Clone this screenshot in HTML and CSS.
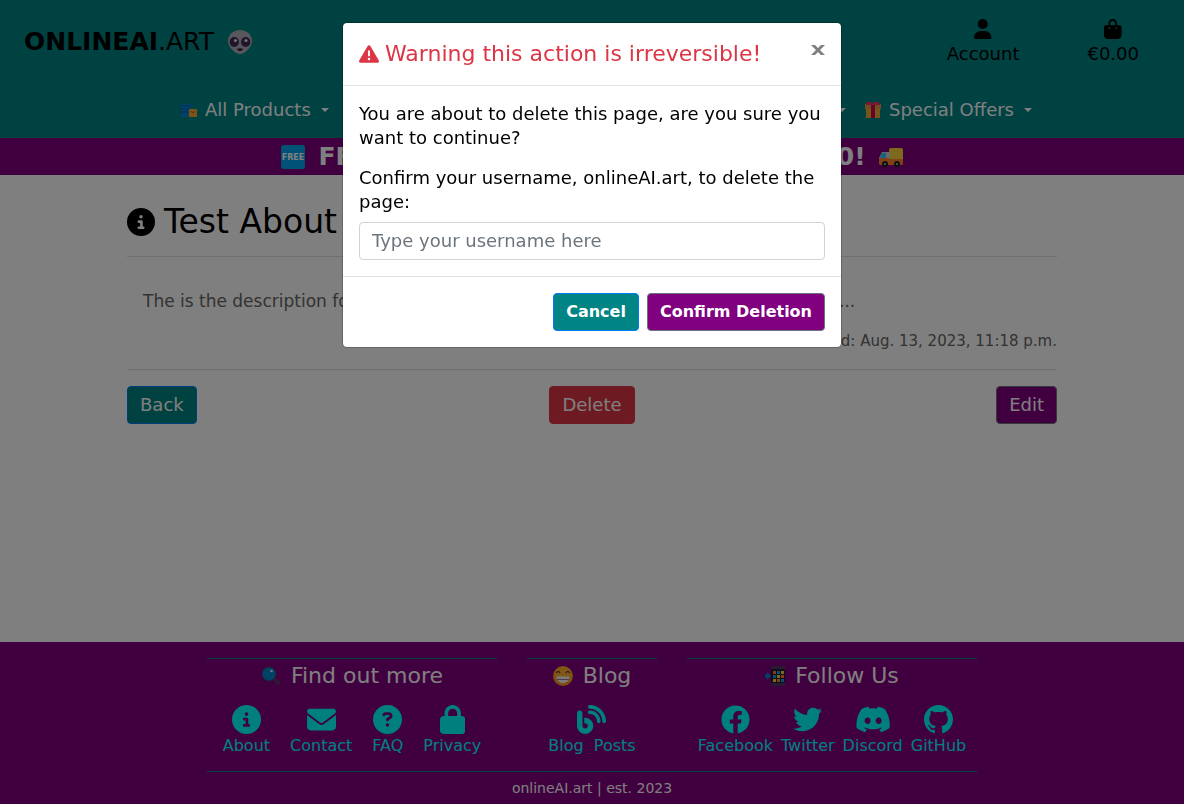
FILE: index.html
```html
<!DOCTYPE html>
<html lang="en">
<head>
<meta charset="utf-8">
<meta name="viewport" content="width=device-width, initial-scale=1">
<title>onlineAI.art</title>
<link rel="stylesheet" href="styles.css">
</head>
<body>
<header class="site-header">
  <div class="topbar">
    <a class="brand" href="#"><span><strong>ONLINEAI</strong>.ART</span>
      <svg class="brand-icon" viewBox="0 0 24 24" aria-hidden="true"><path d="M12 0C5 0 0 5 0 11c0 6 7 13 12 13s12-7 12-13C24 5 19 0 12 0z" fill="#b4acbc"/><ellipse cx="6.3" cy="12" rx="4.7" ry="5" fill="#402a55"/><ellipse cx="17.7" cy="12" rx="4.7" ry="5" fill="#402a55"/><circle cx="7.5" cy="10.5" r="1.6" fill="#e8e0f0"/><circle cx="18" cy="10.5" r="1.6" fill="#e8e0f0"/><path d="M9.500 19c1 2 4 2 5 0z" fill="#1c1c1c" stroke="#1c1c1c"/></svg>
    </a>
    <nav class="account" aria-label="Account">
      <a href="#"><svg viewBox="0 0 448 512" aria-hidden="true"><path d="M224 256A128 128 0 1 0 224 0a128 128 0 1 0 0 256zm-45.700 48C79.800 304 0 383.800 0 482.300C0 498.700 13.300 512 29.700 512H418.300c16.400 0 29.700-13.300 29.700-29.700C448 383.800 368.200 304 269.700 304H178.300z"/></svg>Account</a>
      <a href="#"><svg viewBox="0 0 448 512" aria-hidden="true"><path d="M160 112c0-35.300 28.700-64 64-64s64 28.700 64 64v48H160V112zm-48 48H48c-26.500 0-48 21.500-48 48V416c0 53 43 96 96 96H352c53 0 96-43 96-96V208c0-26.500-21.500-48-48-48H336V112C336 50.100 285.900 0 224 0S112 50.100 112 112v48zm24 48a24 24 0 1 1 0 48 24 24 0 1 1 0-48zm152 24a24 24 0 1 1 48 0 24 24 0 1 1-48 0z"/></svg>€0.00</a>
    </nav>
  </div>
  <nav class="main-nav" aria-label="Products">
    <a href="#"><svg class="nav-icon" viewBox="0 0 18 16" aria-hidden="true"><path d="M1 2h11v13H1z" fill="#0084ce"/><path d="M0 4h12M0 7h12M0 10h12" stroke="#00599a" stroke-width="1"/><path d="M9 7h8v8H9z" fill="#f8a832"/><path d="M11 9c1 2 3 2 4 0" fill="none" stroke="#a35f08"/></svg>All Products<span class="caret"></span></a>
    <a class="nav-middle" href="#">Art<span class="caret"></span></a>
    <a href="#"><svg class="nav-icon" viewBox="0 0 18 18" aria-hidden="true"><path d="M1 3h16v5H1z" fill="#e19747"/><path d="M2 8h14v9H2z" fill="#f0ad35"/><path d="M3 1h5l1 3 1-3h5l1 3H2z" fill="#f92f60"/><path d="M7 4h4v13H7z" fill="#ca0b4a"/></svg>Special Offers<span class="caret"></span></a>
  </nav>
</header>
<div class="banner">
  <svg class="banner-icon" viewBox="0 0 26 26" aria-hidden="true"><rect x="1" y="1" width="24" height="24" rx="3" fill="#00a6ed"/><text class="free-text" x="13" y="16" text-anchor="middle">FREE</text></svg>
  <span>FREE DELIVERY ON ORDERS OVER €50!</span>
  <svg class="banner-icon" viewBox="0 0 26 26" aria-hidden="true"><rect x="11" y="4" width="14" height="14" rx="2" fill="#fcd53f"/><path d="M4 8h8v12H1v-6z" fill="#d3d3d3"/><path d="M4 9h4v5H2z" fill="#26c9fc"/><path d="M1 14h10l1 1h13v5l-1 1H2l-1-1z" fill="#ff822d"/><circle cx="7" cy="20" r="3" fill="#1c1c1c"/><circle cx="19" cy="20" r="3" fill="#1c1c1c"/><circle cx="7" cy="20" r="1" fill="#bebebe"/><circle cx="19" cy="20" r="1" fill="#bebebe"/></svg>
</div>
<main class="page">
  <h1 class="page-title"><svg viewBox="0 0 512 512" aria-hidden="true"><path d="M256 512A256 256 0 1 0 256 0a256 256 0 1 0 0 512zM216 336h24V272H216c-13.300 0-24-10.700-24-24s10.700-24 24-24h48c13.300 0 24 10.700 24 24v88h8c13.300 0 24 10.700 24 24s-10.700 24-24 24H216c-13.300 0-24-10.700-24-24s10.700-24 24-24zm40-208a32 32 0 1 1 0 64 32 32 0 1 1 0-64z"/></svg>Test About</h1>
  <div class="page-text">
    <p class="description">The is the description for the test about page, and it has some text to read again....</p>
    <p class="date">Last edited: Aug. 13, 2023, 11:18 p.m.</p>
  </div>
  <div class="actions">
    <button class="btn btn-teal" type="button">Back</button>
    <button class="btn btn-red" type="button">Delete</button>
    <button class="btn btn-purple" type="button">Edit</button>
  </div>
</main>
<footer class="site-footer">
  <div class="footer-inner">
    <div class="footer-columns">
      <section class="footer-col">
        <h2><svg viewBox="0 0 20 20" aria-hidden="true"><path d="m12 13 2-2 5 5c1 1-1 4-3 3z" fill="#533566"/><circle cx="8" cy="8" r="7.5" fill="#533566"/><circle cx="8" cy="8" r="6.5" fill="#0084ce"/><circle cx="10.5" cy="5" r="1.3" fill="#d8f0ff"/></svg>Find out more</h2>
        <div class="links links-wide">
          <a href="#"><svg viewBox="0 0 512 512" aria-hidden="true"><path d="M256 512A256 256 0 1 0 256 0a256 256 0 1 0 0 512zM216 336h24V272H216c-13.300 0-24-10.700-24-24s10.700-24 24-24h48c13.300 0 24 10.700 24 24v88h8c13.300 0 24 10.700 24 24s-10.700 24-24 24H216c-13.300 0-24-10.700-24-24s10.700-24 24-24zm40-208a32 32 0 1 1 0 64 32 32 0 1 1 0-64z"/></svg>About</a>
          <a href="#"><svg viewBox="0 0 512 512" aria-hidden="true"><path d="M48 64C21.500 64 0 85.500 0 112c0 15.100 7.100 29.300 19.200 38.400L236.800 313.600c11.400 8.500 27 8.500 38.400 0L492.800 150.400c12.100-9.100 19.200-23.300 19.200-38.400c0-26.500-21.500-48-48-48H48zM0 176V384c0 35.300 28.700 64 64 64H448c35.300 0 64-28.700 64-64V176L294.400 339.200c-22.800 17.100-54 17.100-76.800 0L0 176z"/></svg>Contact</a>
          <a href="#"><svg viewBox="0 0 512 512" aria-hidden="true"><path d="M256 512A256 256 0 1 0 256 0a256 256 0 1 0 0 512zM169.800 165.300c7.900-22.300 29.100-37.300 52.800-37.300h58.300c34.900 0 63.100 28.300 63.100 63.100c0 22.600-12.100 43.500-31.700 54.800L280 264.400c-.2 13-10.900 23.600-24 23.600c-13.300 0-24-10.700-24-24V250.500c0-8.600 4.600-16.500 12.100-20.800l44.300-25.400c4.700-2.700 7.600-7.700 7.600-13.100c0-8.400-6.800-15.100-15.100-15.100H222.600c-3.400 0-6.400 2.100-7.500 5.300l-.4 1.200c-4.400 12.500-18.200 19-30.600 14.600s-19-18.200-14.600-30.600l.4-1.200zM224 352a32 32 0 1 1 64 0 32 32 0 1 1-64 0z"/></svg>FAQ</a>
          <a href="#"><svg viewBox="0 0 448 512" aria-hidden="true"><path d="M144 144v48H304V144c0-44.200-35.800-80-80-80s-80 35.800-80 80zM80 192V144C80 64.500 144.500 0 224 0s144 64.500 144 144v48h16c35.300 0 64 28.700 64 64V448c0 35.300-28.700 64-64 64H64c-35.300 0-64-28.700-64-64V256c0-35.300 28.700-64 64-64H80z"/></svg>Privacy</a>
        </div>
      </section>
      <section class="footer-col">
        <h2><svg viewBox="0 0 20 20" aria-hidden="true"><circle cx="10" cy="10" r="10" fill="#ff9a1f"/><circle cx="10" cy="9" r="8" fill="#ffb02e"/><path d="M3.500 7c.5-2 3-2 3.500 0M13 7c.5-2 3-2 3.500 0" fill="none" stroke="#402a32" stroke-width="1.200"/><path d="M3.500 10.500h13c0 4-3 6.500-6.500 6.500s-6.500-2.500-6.500-6.500z" fill="#f4f4f4"/><path d="M4 13.500h12" stroke="#a3709c"/></svg>Blog</h2>
        <div class="links">
          <a href="#"><svg viewBox="0 0 512 512" aria-hidden="true"><path d="M192 32c0 17.700 14.300 32 32 32c123.700 0 224 100.300 224 224c0 17.700 14.300 32 32 32s32-14.300 32-32C512 128.900 383.100 0 224 0c-17.700 0-32 14.300-32 32zm0 96c0 17.700 14.300 32 32 32c70.700 0 128 57.300 128 128c0 17.700 14.300 32 32 32s32-14.300 32-32c0-106-86-192-192-192c-17.700 0-32 14.300-32 32zM96 144c0-26.500-21.500-48-48-48S0 117.500 0 144V368c0 79.500 64.500 144 144 144s144-64.500 144-144s-64.500-144-144-144H128v96h16c26.500 0 48 21.500 48 48s-21.500 48-48 48s-48-21.500-48-48V144z"/></svg>Blog&nbsp; Posts</a>
        </div>
      </section>
      <section class="footer-col">
        <h2><svg viewBox="0 0 20 20" aria-hidden="true"><rect x="6" width="14" height="20" rx="2" fill="#533566"/><path d="M6 3h14v14H6z" fill="#241a2c"/><path d="M8 5h3v3H8zM16 9h3v3h-3zM12 13h3v3h-3z" fill="#ff822d"/><path d="M12 5h3v3h-3zM8 9h3v3H8zM16 13h3v3h-3z" fill="#00a6ed"/><path d="M16 5h3v3h-3zM12 9h3v3h-3zM8 13h3v3H8z" fill="#fcd53f"/><path d="M0 8.500h2V6l4 4-4 4v-2.500H0z" fill="#0084ce"/></svg>Follow Us</h2>
        <div class="links">
          <a href="#"><svg viewBox="0 0 512 512" aria-hidden="true"><path d="M504 256C504 119 393 8 256 8S8 119 8 256c0 123.780 90.690 226.380 209.250 245V327.690h-63V256h63v-54.640c0-62.150 37-96.480 93.670-96.480 27.140 0 55.520 4.840 55.520 4.840v61h-31.280c-30.800 0-40.410 19.120-40.410 38.730V256h68.780l-11 71.690h-57.780V501C413.310 482.380 504 379.780 504 256z"/></svg>Facebook</a>
          <a href="#"><svg viewBox="0 0 512 512" aria-hidden="true"><path d="M459.370 151.716c.325 4.548.325 9.097.325 13.645 0 138.720-105.583 298.558-298.558 298.558-59.452 0-114.680-17.219-161.137-47.106 8.447.974 16.568 1.299 25.340 1.299 49.055 0 94.213-16.568 130.274-44.832-46.132-.975-84.792-31.188-98.112-72.772 6.498.974 12.995 1.624 19.818 1.624 9.421 0 18.843-1.300 27.614-3.573-48.081-9.747-84.143-51.980-84.143-102.985v-1.299c13.969 7.797 30.214 12.670 47.431 13.319-28.264-18.843-46.781-51.005-46.781-87.391 0-19.492 5.197-37.360 14.294-52.954 51.655 63.675 129.300 105.258 216.365 109.807-1.624-7.797-2.599-15.918-2.599-24.040 0-57.828 46.782-104.934 104.934-104.934 30.213 0 57.502 12.670 76.670 33.137 23.715-4.548 46.456-13.320 66.599-25.340-7.798 24.366-24.366 44.833-46.132 57.827 21.117-2.273 41.584-8.122 60.426-16.243-14.292 20.791-32.161 39.308-52.628 54.253z"/></svg>Twitter</a>
          <a href="#"><svg viewBox="0 0 640 512" aria-hidden="true"><path d="M524.531,69.836a1.500,1.500,0,0,0-.764-.7A485.065,485.065,0,0,0,404.081,32.030a1.816,1.816,0,0,0-1.923.910,337.461,337.461,0,0,0-14.900,30.600,447.848,447.848,0,0,0-134.426,0,309.541,309.541,0,0,0-15.135-30.600,1.890,1.890,0,0,0-1.924-.910A483.689,483.689,0,0,0,116.085,69.137a1.712,1.712,0,0,0-.788.676C39.068,183.651,18.186,294.690,28.430,404.354a2.016,2.016,0,0,0,.765,1.375A487.666,487.666,0,0,0,176.020,479.918a1.900,1.900,0,0,0,2.063-.676A348.200,348.200,0,0,0,208.120,430.400a1.860,1.860,0,0,0-1.019-2.588,321.173,321.173,0,0,1-45.868-21.853,1.885,1.885,0,0,1-.185-3.126c3.082-2.309,6.166-4.711,9.109-7.137a1.819,1.819,0,0,1,1.900-.256c96.229,43.917,200.410,43.917,295.500,0a1.812,1.812,0,0,1,1.924.233c2.944,2.426,6.027,4.851,9.132,7.160a1.884,1.884,0,0,1-.162,3.126,301.407,301.407,0,0,1-45.890,21.830,1.875,1.875,0,0,0-1,2.611,391.055,391.055,0,0,0,30.014,48.815,1.864,1.864,0,0,0,2.063.7A486.048,486.048,0,0,0,610.700,405.729a1.882,1.882,0,0,0,.765-1.352C623.729,277.594,590.933,167.465,524.531,69.836ZM222.491,337.580c-28.972,0-52.844-26.587-52.844-59.239S193.056,219.100,222.491,219.100c29.665,0,53.306,26.820,52.843,59.239C275.334,310.993,251.924,337.580,222.491,337.580Zm195.380,0c-28.971,0-52.843-26.587-52.843-59.239S388.437,219.100,417.871,219.100c29.667,0,53.307,26.820,52.844,59.239C470.715,310.993,447.538,337.580,417.871,337.580Z"/></svg>Discord</a>
          <a href="#"><svg viewBox="0 0 16 16" aria-hidden="true"><path d="M8 0C3.580 0 0 3.580 0 8c0 3.540 2.290 6.530 5.470 7.590.4.070.550-.170.550-.380 0-.190-.010-.820-.010-1.490-2.010.370-2.530-.490-2.690-.940-.090-.230-.480-.940-.820-1.130-.280-.150-.680-.520-.010-.530.630-.010 1.080.580 1.230.820.720 1.210 1.870.870 2.330.660.070-.520.280-.870.510-1.070-1.780-.2-3.640-.890-3.640-3.950 0-.870.310-1.590.820-2.150-.080-.2-.360-1.020.080-2.120 0 0 .670-.210 2.200.820.640-.180 1.320-.270 2-.270s1.360.090 2 .270c1.530-1.040 2.200-.820 2.200-.820.440 1.100.160 1.920.080 2.120.510.560.820 1.270.820 2.150 0 3.070-1.870 3.750-3.650 3.950.290.250.540.730.540 1.480 0 1.070-.010 1.930-.010 2.200 0 .210.150.460.550.380A8.010 8.010 0 0 0 16 8c0-4.420-3.580-8-8-8z"/></svg>GitHub</a>
        </div>
      </section>
    </div>
    <p class="copyright">onlineAI.art | est. 2023</p>
  </div>
</footer>
<div class="overlay">
  <form class="modal" role="dialog" aria-modal="true" aria-labelledby="modal-title">
    <div class="modal-header">
      <h2 class="modal-title" id="modal-title"><svg viewBox="0 0 512 512" aria-hidden="true"><path d="M256 32c14.200 0 27.300 7.500 34.500 19.800l216 368c7.300 12.400 7.300 27.700 .2 40.100S486.300 480 472 480H40c-14.300 0-27.600-7.700-34.700-20.100s-7-27.800 .2-40.100l216-368C228.700 39.500 241.800 32 256 32zm0 128c-13.300 0-24 10.700-24 24V296c0 13.300 10.700 24 24 24s24-10.700 24-24V184c0-13.300-10.700-24-24-24zm32 224a32 32 0 1 0 -64 0 32 32 0 1 0 64 0z"/></svg>Warning this action is irreversible!</h2>
      <button class="close" type="button" aria-label="Close"><svg viewBox="0 0 14 10" aria-hidden="true"><path d="M0 0h4l3 3 3-3h4L9 5l5 5h-4L7 7l-3 3H0l5-5z"/></svg></button>
    </div>
    <div class="modal-body">
      <p>You are about to delete this page, are you sure you want to continue?</p>
      <label for="username">Confirm your username, onlineAI.art, to delete the page:</label>
      <input id="username" type="text" placeholder="Type your username here">
    </div>
    <div class="modal-footer">
      <button class="btn btn-teal btn-bold" type="button">Cancel</button>
      <button class="btn btn-purple btn-bold" type="submit">Confirm Deletion</button>
    </div>
  </form>
</div>
</body>
</html>
```
FILE: styles.css
```css
* { box-sizing: border-box; }
body {
  margin: 0;
  min-height: 100vh;
  display: flex;
  flex-direction: column;
  background: #fff;
  color: #000;
  font: 18px/24px "DejaVu Sans", sans-serif;
}
h1, h2, p { margin: 0; font-weight: 400; }
a { color: inherit; text-decoration: none; }
svg { display: block; flex: none; fill: currentColor; }

.site-header { background: #008484; }
.topbar {
  display: flex;
  justify-content: space-between;
  align-items: flex-start;
  padding: 19px 45px 0 24px;
}
.brand { display: flex; align-items: center; gap: 14px; font-size: 25px; line-height: 46px; }
.brand-icon { width: 24px; height: 24px; }
.account { display: flex; gap: 68px; }
.account a { display: flex; flex-direction: column; align-items: center; gap: 3px; }
.account svg { height: 20px; }

.main-nav {
  display: flex;
  justify-content: space-between;
  width: 75%;
  margin: 0 auto;
  padding: 32px 4px 16px 32px;
  color: #fff;
}
.main-nav a { display: flex; align-items: center; }
.nav-middle { margin: 0 0 0 auto; padding-right: 18px; }
.nav-icon { width: 18px; margin-right: 7px; }
.caret {
  margin-left: 10px;
  border: 4px solid transparent;
  border-top-color: #fff;
  border-bottom: 0;
}

.banner {
  display: flex;
  justify-content: center;
  align-items: center;
  gap: 12px;
  padding: 2px;
  background: #800080;
  color: #fff;
  font-size: 25px;
  font-weight: 700;
  line-height: 33px;
}
.banner-icon { width: 26px; height: 26px; }
.free-text { fill: #fff; font-size: 8px; }

.page { flex: 1; width: 100%; max-width: 960px; margin: 0 auto; padding: 27px 15px; }
.page-title {
  display: flex;
  align-items: center;
  gap: 9px;
  padding-bottom: 14px;
  border-bottom: 1px solid #e0e0e0;
  font-size: 33px;
  line-height: 40px;
}
.page-title svg { width: 28px; }
.page-text { padding: 32px 0 16px; border-bottom: 1px solid #e0e0e0; color: #666; }
.description { padding: 0 16px; font-size: 17px; }
.date { margin-top: 16px; font-size: 15px; text-align: right; }
.actions {
  display: grid;
  grid-template-columns: 1fr auto 1fr;
  justify-items: start;
  padding-top: 16px;
}
.actions .btn:last-child { justify-self: end; }

.btn {
  padding: 6px 12px;
  border: 1px solid;
  border-radius: 4px;
  color: #fff;
  font: 18px/24px "DejaVu Sans", sans-serif;
}
.btn-teal { background: #008484; border-color: #007bff; }
.btn-red { background: #dc3545; border-color: #dc3545; }
.btn-purple { background: #800080; border-color: #6c757d; }
.btn-bold { font-size: 16px; font-weight: 700; }

.site-footer { padding: 16px 16px 6px; background: #800080; color: #fff; }
.footer-inner { max-width: 770px; margin: 0 auto; }
.footer-columns { display: grid; grid-template-columns: 29fr 13fr 29fr; gap: 30px; }
.footer-col { border-top: 1px solid #008484; }
.footer-col h2 {
  display: flex;
  justify-content: center;
  align-items: center;
  gap: 10px;
  padding-top: 5px;
  font-size: 22px;
  line-height: 24px;
}
.footer-col h2 svg { width: 20px; }
.links {
  display: flex;
  justify-content: center;
  gap: 8px;
  padding: 17px 0 15px;
  color: #0ff;
  font-size: 16px;
  line-height: 20px;
}
.links-wide { gap: 20px; }
.links a { display: flex; flex-direction: column; align-items: center; gap: 2px; white-space: nowrap; }
.links svg { height: 29px; }
.copyright {
  border-top: 1px solid #008484;
  padding-top: 6px;
  font-size: 14px;
  line-height: 20px;
  text-align: center;
}

.overlay { position: fixed; inset: 0; padding: 22px 16px; background: rgba(0, 0, 0, 0.5); }
.modal {
  max-width: 500px;
  margin: 0 auto;
  border: 1px solid rgba(0, 0, 0, 0.2);
  border-radius: 5px;
  background: #fff;
  background-clip: padding-box;
}
.modal-header {
  display: flex;
  justify-content: space-between;
  align-items: flex-start;
  padding: 16px;
  border-bottom: 1px solid #dee2e6;
}
.modal-title {
  display: flex;
  align-items: center;
  gap: 6px;
  color: #dc3545;
  font-size: 22px;
  line-height: 30px;
}
.modal-title svg { width: 20px; }
.close { padding: 6px 0; border: 0; background: none; color: #7f7f7f; }
.close svg { width: 14px; }
.modal-body { padding: 16px; }
.modal-body p { margin-bottom: 16px; }
.modal-body label { display: block; margin-bottom: 8px; }
.modal-body input {
  display: block;
  width: 100%;
  padding: 6px 12px;
  border: 1px solid #ced4da;
  border-radius: 4px;
  color: #495057;
  font: 18px/24px "DejaVu Sans", sans-serif;
}
.modal-body input::placeholder { color: #6c757d; opacity: 1; }
.modal-footer {
  display: flex;
  justify-content: flex-end;
  gap: 8px;
  padding: 16px;
  border-top: 1px solid #dee2e6;
}
```
